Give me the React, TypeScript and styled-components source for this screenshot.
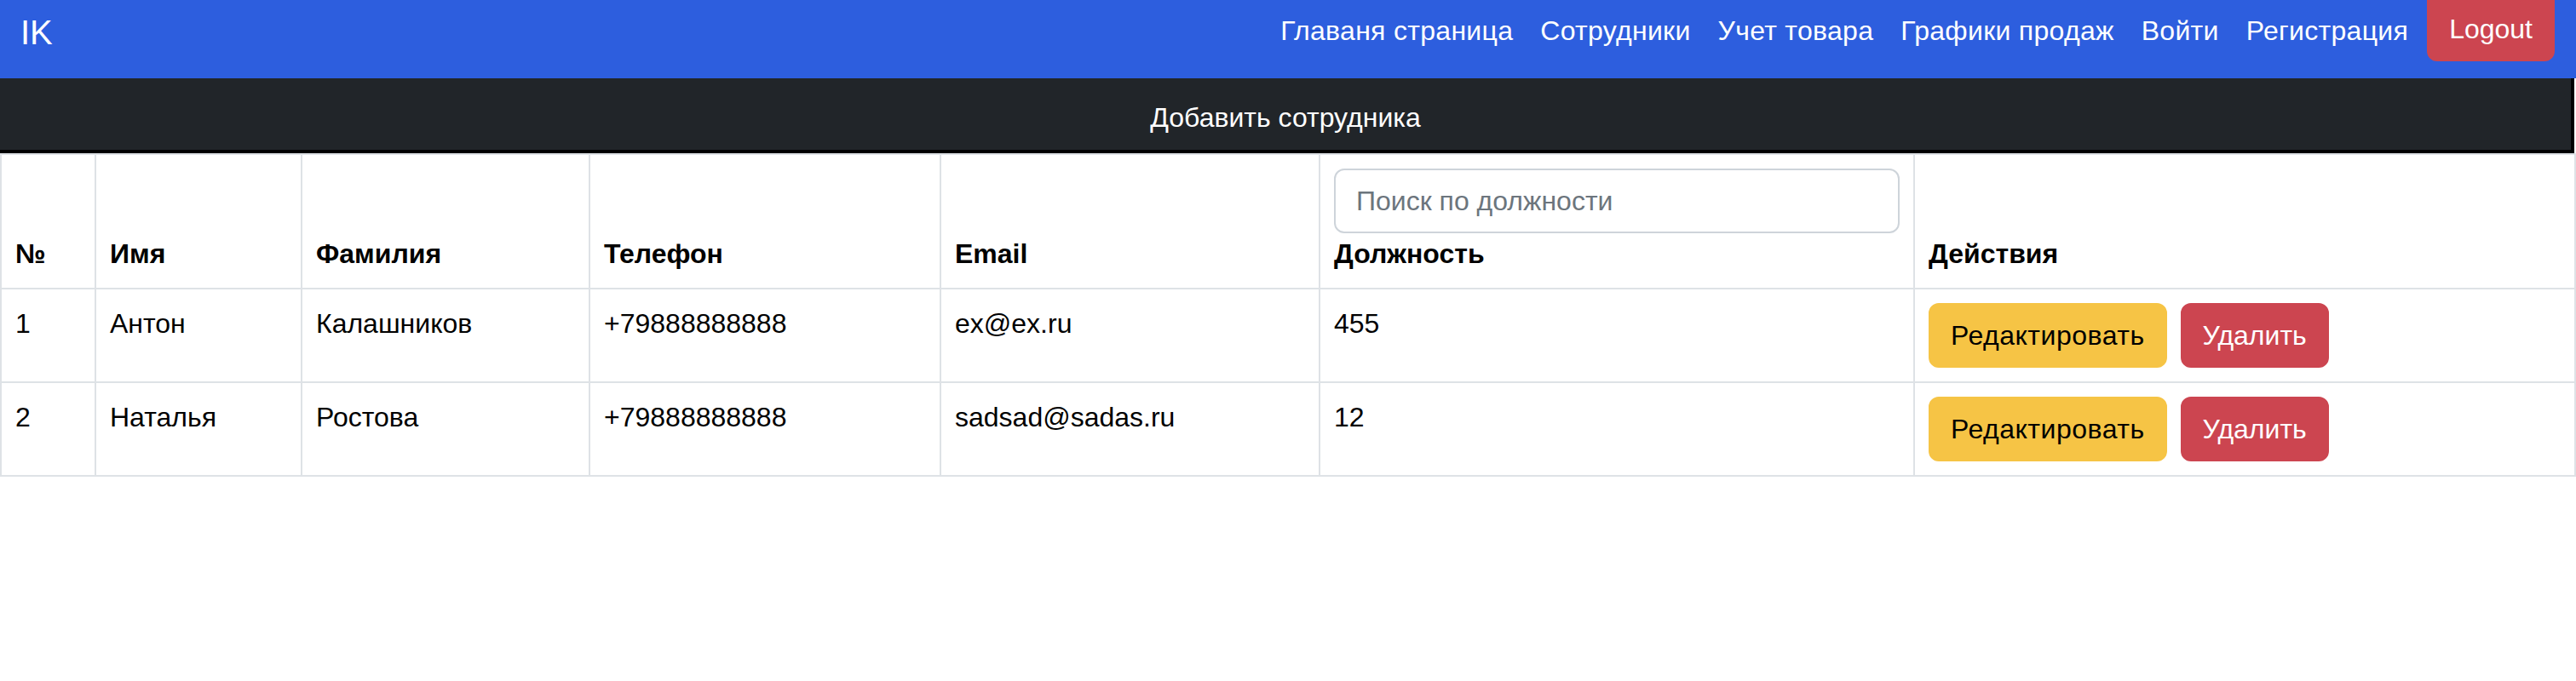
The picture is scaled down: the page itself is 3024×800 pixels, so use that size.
import React from "react";
import styled, { createGlobalStyle } from "styled-components";

const GlobalStyle = createGlobalStyle`
  html, body { margin: 0; padding: 0; background: #ffffff; }
  body {
    font-family: "Liberation Sans", Arial, "Noto Sans", sans-serif;
    font-size: 32px;
    line-height: 48px;
    color: #212529;
  }
  * { box-sizing: border-box; }
`;

const Navbar = styled.nav`
  display: flex;
  align-items: flex-start;
  height: 92px;
  padding: 0 25px 0 24px;
  background: #2d5ede;
`;

const Brand = styled.a`
  padding-top: 8px;
  font-size: 40px;
  line-height: 60px;
  color: #ffffff;
  text-decoration: none;
`;

const NavList = styled.ul`
  display: flex;
  align-items: flex-start;
  margin: 0 0 0 auto;
  padding: 0;
  list-style: none;
`;

const NavLink = styled.a`
  display: block;
  padding: 12px 16px;
  line-height: 48px;
  letter-spacing: 0.3px;
  color: #ffffff;
  text-decoration: none;
  white-space: nowrap;
`;

const LogoutButton = styled.button`
  margin-left: 6px;
  height: 72px;
  padding: 10px 26px 14px;
  border: none;
  border-radius: 0 0 12px 12px;
  background: #cc4550;
  color: #ffffff;
  font-family: inherit;
  font-size: 32px;
  line-height: 48px;
`;

const AddBar = styled.button`
  display: block;
  width: calc(100% - 2px);
  height: 88px;
  margin: 0;
  padding: 22px 0 14px;
  border: 0 solid #000000;
  border-right-width: 4px;
  border-bottom-width: 4px;
  background: #212529;
  color: #ffffff;
  font-family: inherit;
  font-size: 32px;
  line-height: 48px;
  text-align: center;
`;

const Table = styled.table`
  width: calc(100% - 2px);
  table-layout: fixed;
  border-collapse: collapse;
  border: 2px solid #dee2e6;
`;

const HeadCell = styled.th`
  padding: 16px;
  border: 2px solid #dee2e6;
  vertical-align: bottom;
  text-align: left;
  font-weight: 700;
  line-height: 48px;
  color: #000000;
`;

const Cell = styled.td`
  padding: 16px;
  border: 2px solid #dee2e6;
  vertical-align: top;
  line-height: 48px;
  color: #000000;
  white-space: nowrap;
`;

const SearchInput = styled.input`
  display: block;
  width: 100%;
  height: 76px;
  padding: 12px 24px;
  border: 2px solid #ced4da;
  border-radius: 12px;
  font-family: inherit;
  font-size: 32px;
  line-height: 48px;
  color: #212529;
  font-weight: 400;
  &::placeholder { color: #6c757d; }
`;

const Actions = styled.div`
  display: flex;
  gap: 16px;
`;

const ActionButton = styled.button<{ $variant: "warning" | "danger" }>`
  height: 76px;
  padding: 12px 24px;
  border: 2px solid ${(p) => (p.$variant === "warning" ? "#f6c445" : "#cc4550")};
  border-radius: 12px;
  background: ${(p) => (p.$variant === "warning" ? "#f6c445" : "#cc4550")};
  color: ${(p) => (p.$variant === "warning" ? "#000000" : "#ffffff")};
  font-family: inherit;
  font-size: 32px;
  line-height: 48px;
  letter-spacing: ${(p) => (p.$variant === "warning" ? "0.5px" : "0")};
  white-space: nowrap;
`;

const columns = [111, 242, 338, 412, 445, 698, 776];

const employees = [
  { id: 1, name: "Антон", surname: "Калашников", phone: "+79888888888", email: "ex@ex.ru", position: "455" },
  { id: 2, name: "Наталья", surname: "Ростова", phone: "+79888888888", email: "sadsad@sadas.ru", position: "12" },
];

const links = ["Главаня страница", "Сотрудники", "Учет товара", "Графики продаж", "Войти", "Регистрация"];

export default function App() {
  return (
    <>
      <GlobalStyle />
      <Navbar>
        <Brand href="#">IK</Brand>
        <NavList>
          {links.map((l) => (
            <li key={l}>
              <NavLink href="#">{l}</NavLink>
            </li>
          ))}
        </NavList>
        <LogoutButton>Logout</LogoutButton>
      </Navbar>
      <AddBar>Добавить сотрудника</AddBar>
      <Table>
        <colgroup>
          {columns.map((w, i) => (
            <col key={i} style={{ width: w }} />
          ))}
        </colgroup>
        <thead>
          <tr>
            <HeadCell>№</HeadCell>
            <HeadCell>Имя</HeadCell>
            <HeadCell>Фамилия</HeadCell>
            <HeadCell>Телефон</HeadCell>
            <HeadCell>Email</HeadCell>
            <HeadCell>
              <SearchInput placeholder="Поиск по должности" />
              Должность
            </HeadCell>
            <HeadCell>Действия</HeadCell>
          </tr>
        </thead>
        <tbody>
          {employees.map((e) => (
            <tr key={e.id}>
              <Cell>{e.id}</Cell>
              <Cell>{e.name}</Cell>
              <Cell>{e.surname}</Cell>
              <Cell>{e.phone}</Cell>
              <Cell>{e.email}</Cell>
              <Cell>{e.position}</Cell>
              <Cell>
                <Actions>
                  <ActionButton $variant="warning">Редактировать</ActionButton>
                  <ActionButton $variant="danger">Удалить</ActionButton>
                </Actions>
              </Cell>
            </tr>
          ))}
        </tbody>
      </Table>
    </>
  );
}
